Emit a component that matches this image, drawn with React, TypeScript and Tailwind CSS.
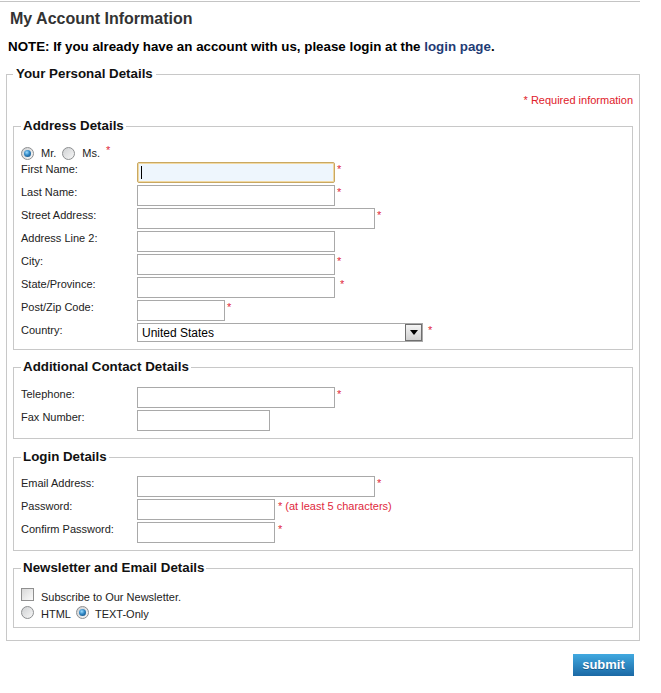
import React from "react";

function Radio({ checked = false }: { checked?: boolean }) {
  return (
    <span className="flex h-[13px] w-[13px] shrink-0 items-center justify-center rounded-full border border-[#8c8e90] bg-linear-to-br from-[#cfd1d3] to-[#f7f7f7]">
      {checked && (
        <span className="h-[7px] w-[7px] rounded-full bg-[radial-gradient(circle_at_40%_35%,#9bdcff_0%,#2f86c4_45%,#0f3f6b_100%)]" />
      )}
    </span>
  );
}

function Req({ gap = "ml-[2px]" }: { gap?: string }) {
  return <span className={`${gap} text-[11px] leading-[15px] text-[#e0283c]`}>*</span>;
}

function Field({
  label,
  width = "w-[198px]",
  req = false,
  reqGap = "ml-[2px]",
  focused = false,
  note,
}: {
  label: string;
  width?: string;
  req?: boolean;
  reqGap?: string;
  focused?: boolean;
  note?: string;
}) {
  return (
    <div className="flex items-start">
      <div className="w-[116px] shrink-0 text-[11px] leading-[15px] text-[#222]">{label}</div>
      {focused ? (
        <div className={`${width} flex h-[21px] items-center rounded-[2px] border border-[#c9a861] bg-[#eef6fd] pl-[3px] shadow-[inset_0_0_0_1px_#f1d9a3]`}>
          <span className="h-[13px] w-px bg-black" />
        </div>
      ) : (
        <div className={`${width} h-[21px] border border-[#a9a9a9] bg-white`} />
      )}
      {req && <Req gap={reqGap} />}
      {note && (
        <span className="ml-[3px] text-[11px] leading-[15px] text-[#e0283c]">{note}</span>
      )}
    </div>
  );
}

function Box({
  title,
  pt,
  pb,
  mt,
  children,
}: {
  title: string;
  pt: string;
  pb: string;
  mt: string;
  children: React.ReactNode;
}) {
  return (
    <fieldset className={`${mt} min-w-0 border border-[#c8c8c8] px-[7px] ${pb}`}>
      <legend className="px-[2px] text-[13.33px] font-bold leading-[16px] text-[#111]">{title}</legend>
      <div className={`${pt} flex flex-col gap-[2px]`}>{children}</div>
    </fieldset>
  );
}

export default function App() {
  return (
    <div className="w-[661px] bg-white font-['Liberation_Sans',Arial,sans-serif] text-black">
      <div className="pt-px">
        <div className="w-[640px] border-t border-[#c4c4c4]" />
      </div>

      <h1 className="mt-[7px] pl-[10px] text-[16px] font-bold leading-[20px] text-[#333]">
        My Account Information
      </h1>

      <p className="mt-[10px] pl-[8px] text-[13.33px] font-bold leading-[16px]">
        NOTE: If you already have an account with us, please login at the{" "}
        <a className="text-[#1f3c75]">login page</a>.
      </p>

      <div className="pl-[6px]">
        <fieldset className="mt-[11px] w-[634px] min-w-0 border border-[#c8c8c8] px-[6px] pb-[12px]">
          <legend className="px-[3px] text-[13.33px] font-bold leading-[16px] text-[#111]">
            Your Personal Details
          </legend>

          <div className="pt-[12px] text-right text-[11px] leading-[13px] text-[#e0202a]">
            * Required information
          </div>

          <Box title="Address Details" mt="mt-[11px]" pt="pt-[11px]" pb="pb-[7px]">
            <div className="mb-[-1px] flex h-[16px] items-center text-[11px] text-[#222]">
              <Radio checked />
              <span className="ml-[7px]">Mr.</span>
              <span className="ml-[6px]">
                <Radio />
              </span>
              <span className="ml-[7px]">Ms.</span>
              <span className="ml-[6px] self-start text-[11px] leading-[11px] text-[#e0283c]">*</span>
            </div>
            <Field label="First Name:" req focused />
            <Field label="Last Name:" req />
            <Field label="Street Address:" width="w-[238px]" req />
            <Field label="Address Line 2:" />
            <Field label="City:" req />
            <Field label="State/Province:" req reqGap="ml-[5px]" />
            <Field label="Post/Zip Code:" width="w-[88px]" req />
            <div className="flex items-start">
              <div className="w-[116px] shrink-0 text-[11px] leading-[15px] text-[#222]">Country:</div>
              <div className="flex h-[19px] w-[286px] items-center border border-[#a9a9a9] bg-white">
                <span className="flex-1 pl-[4px] pt-px text-[12px] leading-[17px] text-black">United States</span>
                <span className="flex h-[17px] w-[17px] items-center justify-center border border-[#6f6f6f] bg-linear-to-b from-[#f4f4f4] to-[#d0d0d0]">
                  <svg width="8" height="5" viewBox="0 0 8 5">
                    <path d="M0 0h8L4 5z" fill="#000" />
                  </svg>
                </span>
              </div>
              <Req gap="ml-[5px]" />
            </div>
          </Box>

          <Box title="Additional Contact Details" mt="mt-[9px]" pt="pt-[12px]" pb="pb-[7px]">
            <Field label="Telephone:" req />
            <Field label="Fax Number:" width="w-[133px]" />
          </Box>

          <Box title="Login Details" mt="mt-[10px]" pt="pt-[11px]" pb="pb-[7px]">
            <Field label="Email Address:" width="w-[238px]" req />
            <Field label="Password:" width="w-[138px]" note="* (at least 5 characters)" />
            <Field label="Confirm Password:" width="w-[138px]" req reqGap="ml-[3px]" />
          </Box>

          <fieldset className="mt-[9px] min-w-0 border border-[#c8c8c8] px-[7px] pb-[6px]">
            <legend className="px-[2px] text-[13.33px] font-bold leading-[16px] text-[#111]">
              Newsletter and Email Details
            </legend>
            <div className="pt-[12px] text-[11px] leading-[14px] text-[#222]">
              <div className="flex items-start">
                <span className="h-[13px] w-[13px] shrink-0 border border-[#8f8f8f] bg-linear-to-br from-[#d8d8d8] to-[#fbfbfb]" />
                <span className="ml-[7px] mt-[2px]">Subscribe to Our Newsletter.</span>
              </div>
              <div className="mt-[2px] flex items-start">
                <Radio />
                <span className="ml-[7px] mt-px">HTML</span>
                <span className="ml-[5px]">
                  <Radio checked />
                </span>
                <span className="ml-[6px] mt-px">TEXT-Only</span>
              </div>
            </div>
          </fieldset>
        </fieldset>

        <div className="mt-[13px] flex w-[634px] justify-end pr-[6px]">
          <button className="h-[22px] w-[61px] bg-linear-to-b from-[#41a9e0] to-[#1b69a5] text-[13px] font-bold leading-[22px] text-white [text-shadow:0_1px_0_#145a8c]">
            submit
          </button>
        </div>
      </div>
    </div>
  );
}
